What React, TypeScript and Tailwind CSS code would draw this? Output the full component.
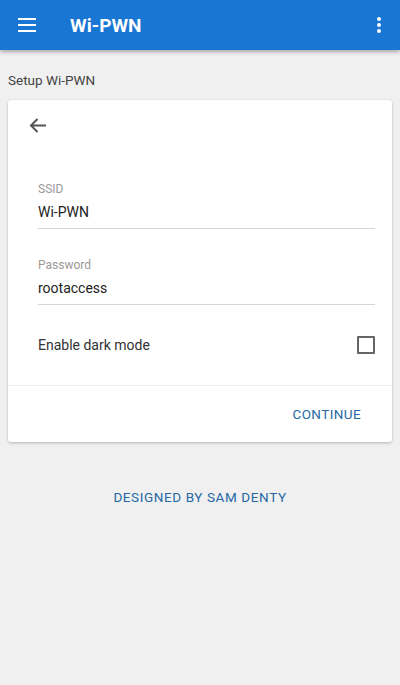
import React from "react";

export default function App() {
  return (
    <div className="w-[400px] h-[685px] bg-[#f0f0f0] flex flex-col" style={{ fontFamily: "Roboto, 'Noto Sans', sans-serif" }}>
      <header className="h-[50px] bg-[#1976d2] flex items-center shadow-[0_2px_4px_rgba(0,0,0,0.3)] relative z-10">
        <div className="w-[70px] pl-[18px] flex items-center">
          <svg width="18" height="14" viewBox="0 0 18 14">
            <rect x="0" y="0" width="18" height="2" fill="#fff" />
            <rect x="0" y="6" width="18" height="2" fill="#fff" />
            <rect x="0" y="12" width="18" height="2" fill="#fff" />
          </svg>
        </div>
        <h1 className="text-white text-[19px] font-bold flex-1 leading-none">Wi-PWN</h1>
        <div className="pr-[19px] flex items-center">
          <svg width="4" height="16" viewBox="0 0 4 16">
            <circle cx="2" cy="2" r="2" fill="#fff" />
            <circle cx="2" cy="8" r="2" fill="#fff" />
            <circle cx="2" cy="14" r="2" fill="#fff" />
          </svg>
        </div>
      </header>
      <div className="px-[8px]">
        <div className="h-[50px] flex items-center text-[13.5px] text-[#444] pt-[11px]">Setup Wi-PWN</div>
        <div className="bg-white rounded-[3px] shadow-[0_1px_3px_rgba(0,0,0,0.25)]">
          <div className="px-[30px] pt-[17px]">
            <div className="-ml-[9px] h-[16px] flex items-center">
              <svg width="17" height="15" viewBox="0 0 17 15" fill="none" stroke="#555" strokeWidth="2">
                <path d="M17 7.5H2M8.5 1L2 7.5L8.5 14" />
              </svg>
            </div>
            <div className="mt-[49px]">
              <div className="text-[12px] text-[#9a9a9a] leading-[14px]">SSID</div>
              <div className="mt-[7px] text-[14px] text-[#222] leading-[18px]">Wi-PWN</div>
              <div className="mt-[7px] h-px bg-[#d6d6d6] w-[337px]" />
            </div>
            <div className="mt-[29px]">
              <div className="text-[12px] text-[#9a9a9a] leading-[14px]">Password</div>
              <div className="mt-[7px] text-[14px] text-[#222] leading-[18px]">rootaccess</div>
              <div className="mt-[7px] h-px bg-[#d6d6d6] w-[337px]" />
            </div>
            <div className="mt-[22px] flex items-center justify-between w-[337px] h-[36px]">
              <span className="text-[14px] text-[#333]">Enable dark mode</span>
              <div className="w-[18px] h-[18px] border-2 border-[#666] rounded-[1px]" />
            </div>
          </div>
          <div className="mt-[22px] h-px bg-[#eeeeee]" />
          <div className="h-[56px] flex items-center justify-end pr-[31px]">
            <span className="text-[13.5px] text-[#2668a3] tracking-[0.4px]">CONTINUE</span>
          </div>
        </div>
        <div className="mt-[45px] text-center text-[13.5px] text-[#2668a3] tracking-[0.6px]">DESIGNED BY SAM DENTY</div>
      </div>
    </div>
  );
}
